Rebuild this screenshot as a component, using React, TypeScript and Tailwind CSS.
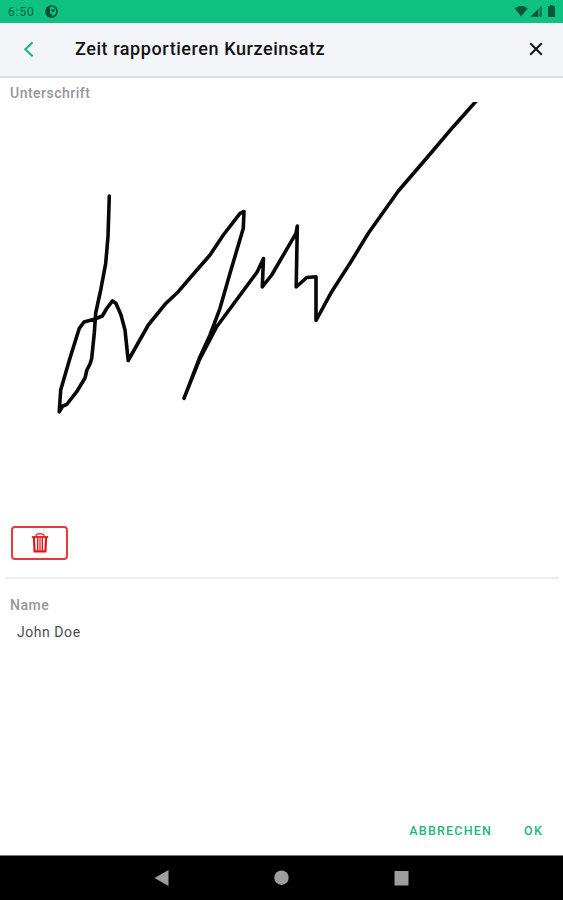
const signature =
  "M109.3 196 L108 236.7 L105.7 263.3 L100.7 290 L95.7 313 L94.3 333 L91.7 358.5 L90 364 L86.9 370 L85 378 L76.7 391.7 L66.7 404.5 L62.7 406 L59.2 411.8 L60.7 390 L70 358 L79.3 328.3 L84 322 L95 319 L102.3 316 L106.7 308.5 L112.5 300.9 L116 303.5 L121 315 L125 330 L128.2 360.5 L148.3 325 L165 304.3 L178.3 291.7 L191.7 276 L210 255 L223.3 235 L240 213.3 L244 211.5 L243.3 228.3 L230 273.3 L220 308.3 L210 335 L200 356.7 L184 398.3 L199.3 360 L216.7 326.7 L257.3 271.7 L263.5 258.5 L262.3 287 L271.7 275 L296 233.3 L297.3 226 L296.2 287 L306.7 277.5 L316 276.7 L316 320.5 L331.7 291.7 L350 263.3 L368.3 233.3 L398.3 191 L425 160 L453.3 126.7 L478 99";

function StatusBar() {
  return (
    <div className="flex h-[23px] shrink-0 items-center justify-between bg-[#0fc182] pl-[8px] pr-[7px] text-[#08633f]">
      <div className="flex items-center gap-[10px]">
        <span className="mt-[2px] w-[27px] text-[12px] leading-[21px] tracking-[0.9px]">6:50</span>
        <svg width="13" height="13" viewBox="0 0 13 13" className="text-[#075237]">
          <circle cx="6.5" cy="6.5" r="5.5" fill="none" stroke="currentColor" strokeWidth="1.6" />
          <path d="M1 2.8L5 1V12C2.5 12 .5 9 .8 6Z" fill="currentColor" />
          <path d="M6.6 4.2H9.4V6.8H6.6Z" fill="currentColor" />
          <path d="M5 8.8H7.2V11.5H5Z" fill="currentColor" />
        </svg>
      </div>
      <svg width="42" height="13" viewBox="0 0 42 13" fill="#07583a">
        <path d="M0.6 3.2Q7.2-1.8 13.8 3.2L7.2 11.5Z" />
        <path d="M16.5 11.8L27.5.8V11.8Z" opacity=".4" />
        <path d="M16.5 11.8L24 4.3V11.8Z" />
        <path d="M26.5 1.8h1v10h-1z" />
        <path d="M36-.1h3v1.4h2v10.8h-7V1.3h2Z" />
      </svg>
    </div>
  );
}

function Header() {
  return (
    <header className="flex h-[55px] shrink-0 items-center border-b-2 border-[#dde0e1] bg-[#f3f5f9] pb-[1px] pl-[23px] pr-[20px]">
      <svg width="12" height="16" viewBox="0 0 12 16" fill="none" stroke="#16b881" strokeWidth="2.1">
        <path d="M9.6 1.2L2.4 8.2L9.6 15.2" />
      </svg>
      <h1 className="ml-[40px] flex-1 whitespace-nowrap text-[18px] font-medium leading-[24px] tracking-[0.57px] text-[#111214]">
        Zeit rapportieren Kurzeinsatz
      </h1>
      <svg width="14" height="14" viewBox="0 0 14 14" fill="none" stroke="#15161a" strokeWidth="2">
        <path d="M1.2 1.2L12.8 12.8M12.8 1.2L1.2 12.8" />
      </svg>
    </header>
  );
}

function NavigationBar() {
  return (
    <div className="flex h-[45px] shrink-0 items-center justify-center border-t border-[#777] bg-black">
      <svg width="257" height="18" viewBox="0 0 257 18" fill="#9e9e9e">
        <path d="M1.5 9L15.5 1V17Z" />
        <circle cx="128.5" cy="8.7" r="7.2" />
        <path d="M241.5 2h14v14.5h-14z" />
      </svg>
    </div>
  );
}

export default function App() {
  return (
    <div className="flex h-[900px] w-[563px] flex-col overflow-hidden bg-white font-['Roboto',sans-serif]">
      <StatusBar />
      <Header />
      <main className="flex flex-1 flex-col">
        <div className="h-[24px] pl-[10px] pt-[5px] text-[14px] font-medium leading-[20px] tracking-[0.5px] text-[#96979a]">
          Unterschrift
        </div>
        <svg
          width="563"
          height="424"
          viewBox="0 102 563 424"
          className="shrink-0"
          fill="none"
          stroke="#080808"
          strokeWidth="3.6"
          strokeLinecap="round"
          strokeLinejoin="round"
        >
          <path d={signature} />
        </svg>
        <button className="ml-[11px] flex h-[34px] w-[57px] shrink-0 items-center justify-center rounded-[4px] border-2 border-[#e8393b]">
          <svg width="18" height="20" viewBox="0 0 18 20" fill="none" stroke="#e0161b">
            <path d="M.8 4H17.2" strokeWidth="1.8" />
            <path d="M5 3.5V2.4Q5.5 .9 7 .9H11Q12.5 .9 13 2.4V3.5" strokeWidth="1.2" />
            <path d="M2.9 4.5L3.6 18.4H14.4L15.1 4.5" strokeWidth="2.2" />
            <path d="M6.7 5V17.5M11.3 5V17.5" strokeWidth="1.4" />
            <path d="M9 5V17.5" strokeWidth="1.2" />
          </svg>
        </button>
        <div className="ml-[6px] mr-[4px] mt-[17px] h-[2px] bg-[#ececec]" />
        <div className="mt-[16px] pl-[10px] text-[14px] font-medium leading-[20px] tracking-[0.5px] text-[#96979a]">
          Name
        </div>
        <div className="mt-[7px] pl-[17px] text-[14px] leading-[20px] tracking-[0.55px] text-[#4c4c4e]">
          John Doe
        </div>
        <div className="mt-auto flex justify-end gap-[32px] pb-[14px] pr-[20px] text-[12.5px] font-medium leading-[20px] tracking-[1.2px] text-[#1cb583]">
          <button>ABBRECHEN</button>
          <button>OK</button>
        </div>
      </main>
      <NavigationBar />
    </div>
  );
}
